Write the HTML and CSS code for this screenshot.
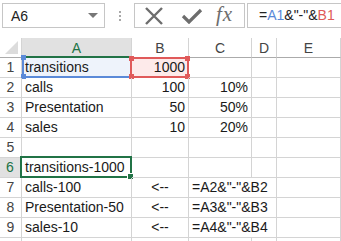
FILE: index.html
```html
<!DOCTYPE html>
<html>
<head>
<meta charset="utf-8">
<link rel="stylesheet" href="styles.css">
</head>
<body>
<div class="app">
  <div class="fbar">
    <div class="namebox"><span class="nb-text">A6</span><span class="caret"></span></div>
    <div class="grip"><i></i><i></i><i></i></div>
    <div class="btns">
      <svg class="ic-x" width="20" height="18" viewBox="0 0 20 18"><path d="M2 1 L18 17 M18 1 L2 17" stroke="#6d6d6d" stroke-width="2.4" fill="none"/></svg>
      <svg class="ic-ok" width="22" height="16" viewBox="0 0 22 16"><path d="M2 8 L8 14 L20 2" stroke="#6d6d6d" stroke-width="3.2" fill="none"/></svg>
      <span class="fx">fx</span>
    </div>
    <div class="formula">=<span class="r-a">A1</span>&amp;"-"&amp;<span class="r-b">B1</span></div>
  </div>
  <div class="sheet">
    <div class="c corner"><span class="tri"></span></div>
    <div class="c ch sel">A</div>
    <div class="c ch">B</div>
    <div class="c ch">C</div>
    <div class="c ch">D</div>
    <div class="c ch">E</div>

    <div class="c rh">1</div>
    <div class="c ref-a">transitions<span class="hl hl-a"><i class="h tl"></i><i class="h bl"></i></span></div>
    <div class="c num ref-b">1000<span class="hl hl-b"><i class="h tl"></i><i class="h tr"></i><i class="h bl"></i><i class="h br"></i></span></div>
    <div class="c"></div><div class="c"></div><div class="c"></div>

    <div class="c rh">2</div>
    <div class="c">calls</div><div class="c num">100</div><div class="c num">10%</div><div class="c"></div><div class="c"></div>

    <div class="c rh">3</div>
    <div class="c">Presentation</div><div class="c num">50</div><div class="c num">50%</div><div class="c"></div><div class="c"></div>

    <div class="c rh">4</div>
    <div class="c">sales</div><div class="c num">10</div><div class="c num">20%</div><div class="c"></div><div class="c"></div>

    <div class="c rh">5</div>
    <div class="c"></div><div class="c"></div><div class="c"></div><div class="c"></div><div class="c"></div>

    <div class="c rh sel">6</div>
    <div class="c active">transitions-1000<span class="cursor"><i class="fill"></i></span></div>
    <div class="c"></div><div class="c"></div><div class="c"></div><div class="c"></div>

    <div class="c rh">7</div>
    <div class="c">calls-100</div><div class="c mid">&lt;--</div><div class="c wide">=A2&amp;"-"&amp;B2</div><div class="c"></div>

    <div class="c rh">8</div>
    <div class="c">Presentation-50</div><div class="c mid">&lt;--</div><div class="c wide">=A3&amp;"-"&amp;B3</div><div class="c"></div>

    <div class="c rh">9</div>
    <div class="c">sales-10</div><div class="c mid">&lt;--</div><div class="c wide">=A4&amp;"-"&amp;B4</div><div class="c"></div>

    <div class="c rh"></div>
    <div class="c"></div><div class="c"></div><div class="c"></div><div class="c"></div><div class="c"></div>
  </div>
</div>
</body>
</html>
```
FILE: styles.css
```css
html, body { margin: 0; padding: 0; background: #fff; }
body { width: 341px; height: 241px; overflow: hidden; font-family: "Liberation Sans", Arial, sans-serif; }
.app { width: 341px; }

.fbar { height: 38px; position: relative; display: flex; align-items: flex-start; padding-top: 3px; box-sizing: border-box; }
.namebox { margin-left: 2px; width: 103px; height: 25px; box-sizing: border-box; border: 1px solid #c6c6c6; display: flex; align-items: center; justify-content: space-between; padding: 0 6px 0 8px; font-size: 14px; color: #222; }
.caret { width: 0; height: 0; border-left: 5px solid transparent; border-right: 5px solid transparent; border-top: 5px solid #777; margin-right: 0; }
.grip { width: 29px; height: 25px; display: flex; flex-direction: column; align-items: center; justify-content: center; gap: 2px; }
.grip i { display: block; width: 2px; height: 2px; background: #a8a8a8; }
.btns { width: 111px; height: 25px; box-sizing: border-box; border: 1px solid #c6c6c6; display: flex; align-items: center; padding-left: 9px; }
.ic-x { margin-right: 17px; }
.ic-ok { margin-right: 13px; }
.fx { font-family: "Liberation Serif", "DejaVu Serif", serif; font-style: italic; font-size: 21px; color: #6d6d6d; line-height: 1; margin-top: -2px; letter-spacing: 1px; }
.formula { margin-left: 2px; flex: 1; height: 25px; box-sizing: border-box; border: 1px solid #c6c6c6; border-right: none; padding-left: 11px; font-size: 14px; line-height: 23px; color: #222; }
.r-a { color: #5b8ad8; }
.r-b { color: #e05a5a; }

.sheet { display: grid; grid-template-columns: 22px 110px 57px 63px 25px 64px; grid-auto-rows: 20px; font-size: 14px; color: #1a1a1a; }
.c { box-sizing: border-box; border-right: 1px solid #d4d4d4; border-bottom: 1px solid #d4d4d4; padding: 0 3px; line-height: 19px; white-space: nowrap; position: relative; }
.corner { border-bottom: 1px solid #ababab; border-right: 1px solid #d4d4d4; }
.tri { position: absolute; right: 3px; bottom: 3px; width: 0; height: 0; border-left: 13px solid transparent; border-bottom: 13px solid #dcdcdc; }
.ch { text-align: center; color: #444; border-bottom: 1px solid #ababab; line-height: 20px; }
.ch.sel { background: #e1e1e1; color: #217346; border-bottom: 2px solid #217346; }
.rh { text-align: center; color: #444; padding: 0; }
.rh.sel { background: #e1e1e1; color: #217346; border-right: 2px solid #217346; }
.num { text-align: right; }
.mid { text-align: center; }
.wide { grid-column: span 2; }

.ref-a { background: #eef3fb; }
.ref-b { background: #fdeaea; }
.hl { position: absolute; left: -1px; top: -1px; right: -1px; bottom: -1px; box-sizing: border-box; }
.hl-a { border: 2px solid #5b8ad8; border-right: none; border-top: none; left: 0; top: 0; }
.hl-b { border: 2px solid #e05a5a; top: -1px; left: -2px; }
.h { position: absolute; width: 5px; height: 5px; }
.hl-a .h { background: #5b8ad8; }
.hl-b .h { background: #e05a5a; }
.h.tl { left: -3px; top: -3px; }
.h.tr { right: -3px; top: -3px; }
.h.bl { left: -3px; bottom: -3px; }
.h.br { right: -3px; bottom: -3px; }

.cursor { position: absolute; left: -2px; top: -2px; right: -1px; bottom: -1px; border: 2px solid #217346; }
.fill { position: absolute; right: -4px; bottom: -4px; width: 5px; height: 5px; background: #217346; border: 1px solid #fff; }
```
